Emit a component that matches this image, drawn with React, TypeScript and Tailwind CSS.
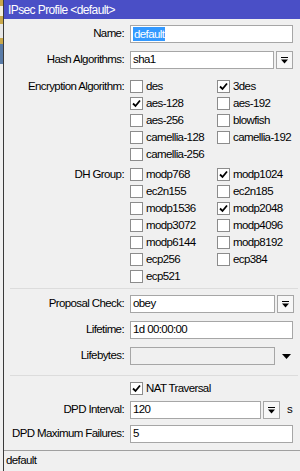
import type { ReactNode } from 'react';

function DropIcon() {
  return (
    <svg width="7" height="7" viewBox="0 0 7 7">
      <rect x="0" y="0" width="7" height="1" fill="#000" />
      <path d="M0 2.5 L7 2.5 L3.5 6.5 Z" fill="#000" />
    </svg>
  );
}

function Check({ label, checked }: { label: string; checked?: boolean }) {
  return (
    <div className="flex items-center h-[17px]">
      <span className="w-[13px] h-[13px] border border-[#8c8c8c] bg-white flex items-center justify-center shrink-0">
        {checked && (
          <svg width="9" height="9" viewBox="0 0 9 9">
            <path d="M1 4.5 L3.5 7 L8 1.5" stroke="#000" strokeWidth="1.8" fill="none" />
          </svg>
        )}
      </span>
      <span className="ml-[3px]">{label}</span>
    </div>
  );
}

function Row({ label, children, className }: { label: string; children: ReactNode; className?: string }) {
  return (
    <div className={`flex items-center ${className ?? ''}`}>
      <div className="w-[122px] text-right pr-[2px] shrink-0">{label}</div>
      <div className="ml-[4px] flex-1 flex items-center">{children}</div>
    </div>
  );
}

function Field({ value, width, drop, selected }: { value: string; width: string; drop?: boolean; selected?: boolean }) {
  return (
    <div className="flex items-center">
      <div className={`${width} h-[18px] bg-white border border-[#a6a6a6] flex items-center px-[2px]`}>
        {selected ? <span className="bg-[#3399ff] text-white leading-[14px] px-[1px]">{value}</span> : value}
      </div>
      {drop && (
        <div className="ml-[2px] w-[17px] h-[18px] border border-[#a6a6a6] bg-[#f7f7f7] flex items-center justify-center">
          <DropIcon />
        </div>
      )}
    </div>
  );
}

const encryption: [string, boolean][] = [
  ['des', false], ['3des', true],
  ['aes-128', true], ['aes-192', false],
  ['aes-256', false], ['blowfish', false],
  ['camellia-128', false], ['camellia-192', false],
  ['camellia-256', false],
];

const dhGroups: [string, boolean][] = [
  ['modp768', false], ['modp1024', true],
  ['ec2n155', false], ['ec2n185', false],
  ['modp1536', false], ['modp2048', true],
  ['modp3072', false], ['modp4096', false],
  ['modp6144', false], ['modp8192', false],
  ['ecp256', false], ['ecp384', false],
  ['ecp521', false],
];

export default function App() {
  return (
    <div
      className="w-[300px] h-[471px] flex bg-[#f0f0f0] text-[11.5px] tracking-[-0.6px] text-black overflow-hidden"
      style={{ fontFamily: '"Liberation Sans", Arial, sans-serif' }}
    >
      <div className="w-[3px] flex flex-col shrink-0">
        <div className="h-[6px] bg-[#c9a84a]" />
        <div className="h-[10px] bg-[#f5f0dc]" />
        <div className="h-[8px] bg-[#c9a84a]" />
        <div className="h-[14px] bg-[#e8e8e8]" />
        <div className="h-[6px] bg-[#c9a84a]" />
        <div className="h-[20px] bg-[#5a7ca8]" />
        <div className="flex-1 bg-[#f0f0f0]" />
      </div>
      <div className="flex-1 flex flex-col border-l border-[#3a3a3a]">
        <div className="h-[19px] bg-[#4a4fc6] text-white text-[12px] flex items-center pl-[4px] shrink-0">
          IPsec Profile &lt;default&gt;
        </div>

        <Row label="Name:" className="mt-[6px]">
          <Field value="default" width="w-[163px]" selected />
        </Row>
        <Row label="Hash Algorithms:" className="mt-[8px]">
          <Field value="sha1" width="w-[144px]" drop />
        </Row>

        <div className="flex mt-[9px]">
          <div className="w-[122px] text-right pr-[2px] shrink-0 h-[17px] leading-[17px]">Encryption Algorithm:</div>
          <div className="ml-[4px] grid grid-cols-[87px_87px]">
            {encryption.map(([l, c]) => (
              <Check key={l} label={l} checked={c} />
            ))}
          </div>
        </div>

        <div className="flex mt-[3px]">
          <div className="w-[122px] text-right pr-[2px] shrink-0 h-[17px] leading-[17px]">DH Group:</div>
          <div className="ml-[4px] grid grid-cols-[87px_87px]">
            {dhGroups.map(([l, c]) => (
              <Check key={l} label={l} checked={c} />
            ))}
          </div>
        </div>

        <div className="mt-[3px] mx-[6px] h-[1px] bg-[#dcdcdc]" />

        <Row label="Proposal Check:" className="mt-[6px]">
          <Field value="obey" width="w-[145px]" drop />
        </Row>
        <Row label="Lifetime:" className="mt-[8px]">
          <Field value="1d 00:00:00" width="w-[163px]" />
        </Row>
        <Row label="Lifebytes:" className="mt-[8px]">
          <div className="w-[145px] h-[18px] border border-[#a6a6a6] bg-[#f0f0f0]" />
          <svg className="ml-[7px]" width="9" height="5" viewBox="0 0 9 5">
            <path d="M0 0 L9 0 L4.5 5 Z" fill="#000" />
          </svg>
        </Row>

        <div className="mt-[10px] mx-[6px] h-[1px] bg-[#dcdcdc]" />

        <div className="mt-[4px] ml-[126px]">
          <Check label="NAT Traversal" checked />
        </div>
        <Row label="DPD Interval:" className="mt-[4px]">
          <Field value="120" width="w-[131px]" drop />
          <span className="ml-[7px]">s</span>
        </Row>
        <Row label="DPD Maximum Failures:" className="mt-[6px]">
          <Field value="5" width="w-[163px]" />
        </Row>

        <div className="mt-auto h-[21px] border-t border-[#a0a0a0] bg-[#f0f0f0] flex items-center pl-[2px]">
          default
        </div>
      </div>
    </div>
  );
}
